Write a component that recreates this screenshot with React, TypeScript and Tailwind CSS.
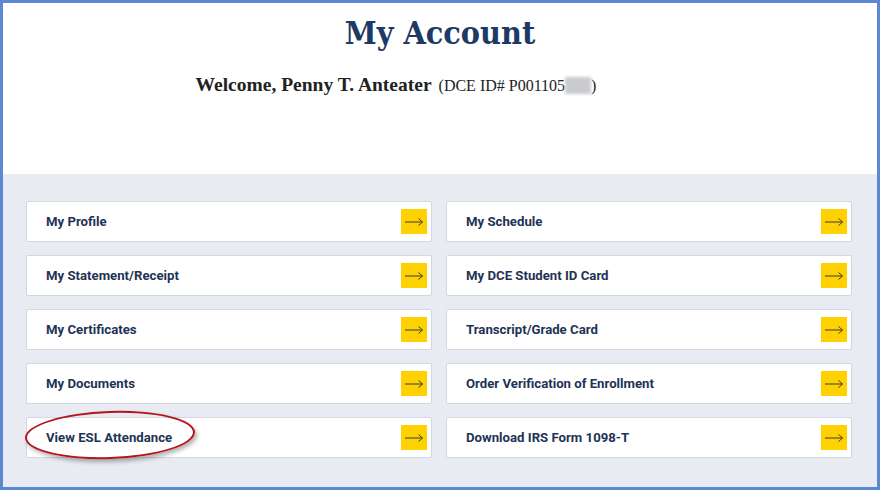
const leftLinks = [
  "My Profile",
  "My Statement/Receipt",
  "My Certificates",
  "My Documents",
  "View ESL Attendance",
];

const rightLinks = [
  "My Schedule",
  "My DCE Student ID Card",
  "Transcript/Grade Card",
  "Order Verification of Enrollment",
  "Download IRS Form 1098-T",
];

function Arrow() {
  return (
    <span className="w-[26px] h-[25px] bg-[#ffd100] flex items-center justify-center shrink-0">
      <svg width="20" height="10" viewBox="0 0 20 10" fill="none">
        <path d="M1 5H18.5M14.5 1.5L18.5 5L14.5 8.5" stroke="#3a3a3a" strokeWidth="1" />
      </svg>
    </span>
  );
}

function LinkCard({ label, circled }: { label: string; circled?: boolean }) {
  return (
    <div className="relative h-[41px] bg-white border border-[#d3d7de] rounded-[2px] flex items-center justify-between pl-[19px] pr-[4px]">
      <span className="pt-[1px] text-[13.2px] font-bold text-[#1f3356] font-['Roboto',sans-serif]">{label}</span>
      <Arrow />
      {circled && (
        <span className="absolute left-[-2px] top-[-7px] w-[170px] h-[48px] rounded-[50%] border-2 border-[#b3151c] shadow-[2px_3px_4px_rgba(0,0,0,0.3)] rotate-[-2deg] pointer-events-none" />
      )}
    </div>
  );
}

export default function App() {
  return (
    <div className="w-[880px] h-[490px] border-[3px] border-[#5b88d1] flex flex-col bg-white overflow-hidden">
      {/* Header */}
      <div className="h-[171px] shrink-0 flex flex-col items-center">
        <h1 className="mt-[10px] text-[32px] leading-[40px] font-bold text-[#1d3a66] font-['DejaVu_Serif_Condensed','DejaVu_Serif',serif]">
          My Account
        </h1>
        <p className="mt-[17px] ml-[-88px] flex items-baseline text-[#222] font-['Liberation_Serif',serif]">
          <span className="text-[19.5px] font-bold">Welcome, Penny T. Anteater</span>
          <span className="text-[16px] ml-[7px]">(DCE ID# P001105</span>
          <span className="inline-block w-[26px] h-[17px] bg-[#c9cbd0] blur-[1.5px] self-center translate-y-[1px]" />
          <span className="text-[16px]">)</span>
        </p>
      </div>

      {/* Links */}
      <div className="flex-1 bg-[#e8ebf1] pt-[27px] pl-[23px] pr-[24px]">
        <div className="grid grid-cols-2 gap-x-[14px] gap-y-[13px] w-[826px]">
          {leftLinks.map((l, i) => (
            <div key={l} className="contents">
              <LinkCard label={l} circled={l === "View ESL Attendance"} />
              <LinkCard label={rightLinks[i]} />
            </div>
          ))}
        </div>
      </div>
    </div>
  );
}
